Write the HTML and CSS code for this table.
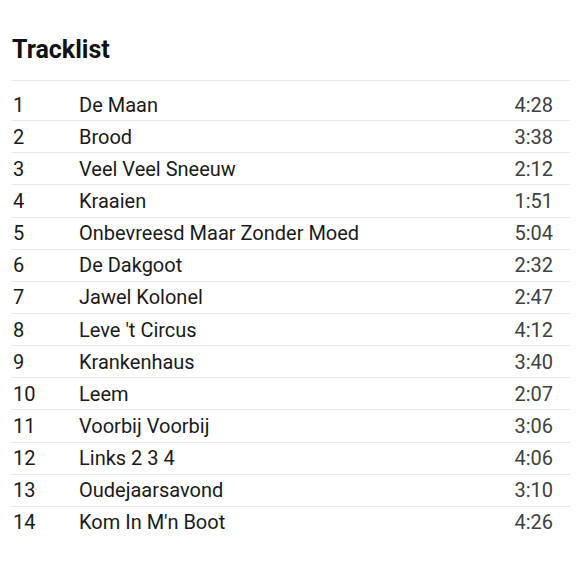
FILE: index.html
```html
<!DOCTYPE html>
<html>
<head>
<meta charset="utf-8">
<link rel="stylesheet" href="styles.css">
</head>
<body>
<div class="page">
  <h2 class="title">Tracklist</h2>
  <div class="list">
    <div class="row"><span class="num">1</span><span class="name">De Maan</span><span class="dur">4:28</span></div>
    <div class="row"><span class="num">2</span><span class="name">Brood</span><span class="dur">3:38</span></div>
    <div class="row"><span class="num">3</span><span class="name">Veel Veel Sneeuw</span><span class="dur">2:12</span></div>
    <div class="row"><span class="num">4</span><span class="name">Kraaien</span><span class="dur">1:51</span></div>
    <div class="row"><span class="num">5</span><span class="name">Onbevreesd Maar Zonder Moed</span><span class="dur">5:04</span></div>
    <div class="row"><span class="num">6</span><span class="name">De Dakgoot</span><span class="dur">2:32</span></div>
    <div class="row"><span class="num">7</span><span class="name">Jawel Kolonel</span><span class="dur">2:47</span></div>
    <div class="row"><span class="num">8</span><span class="name">Leve 't Circus</span><span class="dur">4:12</span></div>
    <div class="row"><span class="num">9</span><span class="name">Krankenhaus</span><span class="dur">3:40</span></div>
    <div class="row"><span class="num">10</span><span class="name">Leem</span><span class="dur">2:07</span></div>
    <div class="row"><span class="num">11</span><span class="name">Voorbij Voorbij</span><span class="dur">3:06</span></div>
    <div class="row"><span class="num">12</span><span class="name">Links 2 3 4</span><span class="dur">4:06</span></div>
    <div class="row"><span class="num">13</span><span class="name">Oudejaarsavond</span><span class="dur">3:10</span></div>
    <div class="row"><span class="num">14</span><span class="name">Kom In M'n Boot</span><span class="dur">4:26</span></div>
  </div>
</div>
</body>
</html>
```
FILE: styles.css
```css
html, body {
  margin: 0;
  padding: 0;
  background: #ffffff;
}
.page {
  font-family: Roboto, "Noto Sans", sans-serif;
  color: #1a1a1a;
  padding: 34px 10px 0 11px;
}
.title {
  margin: 0 0 0 1px;
  font-size: 25px;
  line-height: 32px;
  font-weight: 700;
  color: #111;
  padding-bottom: 14px;
  border-bottom: 1px solid #e8e8e8;
}
.list {
  padding-top: 7px;
}
.row {
  display: flex;
  align-items: center;
  height: 31.2px;
  padding-top: 1px;
  box-sizing: content-box;
  border-bottom: 1px solid #e8e8e8;
  font-size: 20px;
}
.row + .row {
  padding-top: 0;
  height: 31.15px;
}
.row:last-child {
  border-bottom: none;
}
.num {
  width: 66px;
  padding-left: 2px;
}
.name {
  flex: 1;
}
.dur {
  padding-right: 17px;
  color: #404040;
}
```
